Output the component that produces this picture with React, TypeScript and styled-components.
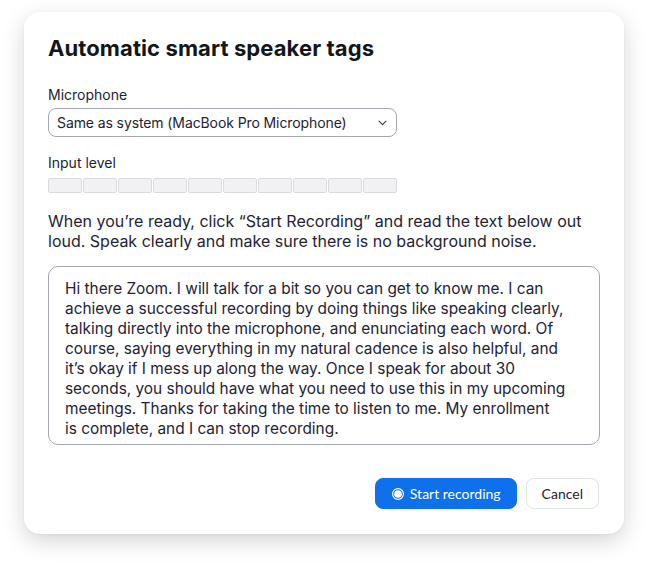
import React from "react";
import styled, { createGlobalStyle } from "styled-components";

const GlobalStyle = createGlobalStyle`
  * { box-sizing: border-box; }
  html, body { margin: 0; padding: 0; background: #ffffff; }
  body { font-family: Inter, "Noto Sans", sans-serif; color: #232333; }
`;

const Page = styled.div`
  padding: 12px 24px 36px 24px;
  width: 648px;
`;

const Card = styled.div`
  width: 600px;
  height: 522px;
  background: #ffffff;
  border-radius: 16px;
  box-shadow: 0 7px 22px rgba(0, 0, 0, 0.17), 0 1px 3px rgba(0, 0, 0, 0.04);
  padding: 22px 24px 25px 24px;
  display: flex;
  flex-direction: column;
`;

const Title = styled.h1`
  margin: 0;
  font-family: Inter, sans-serif;
  font-size: 22px;
  line-height: 28px;
  font-weight: 700;
  letter-spacing: 0.1px;
  color: #131619;
`;

const Label = styled.div<{ $top: number; $bottom: number }>`
  margin-top: ${(p) => p.$top}px;
  margin-bottom: ${(p) => p.$bottom}px;
  font-size: 14px;
  line-height: 20px;
  font-weight: 400;
  color: #232333;
`;

const Select = styled.div`
  width: 349px;
  height: 30px;
  border: 1px solid #a3a7ae;
  border-radius: 8px;
  display: flex;
  align-items: center;
  justify-content: space-between;
  padding: 0 9px 0 8px;
  font-size: 14px;
  letter-spacing: -0.1px;
  color: #232333;
`;

const Meter = styled.div`
  display: flex;
  gap: 1px;
  width: 349px;
`;

const Segment = styled.div`
  width: 34px;
  height: 15px;
  background: #f1f1f5;
  border: 1px solid #d9d9e0;
  border-radius: 2px;
`;

const Instructions = styled.p`
  margin: 18px 0 0 0;
  font-size: 16px;
  line-height: 20px;
  color: #232333;
  white-space: nowrap;
`;

const Script = styled.div`
  margin-top: 15px;
  width: 552px;
  height: 179px;
  border: 1px solid #a3a7ae;
  border-radius: 10px;
  padding: 12px 16px 6px 16px;
  font-size: 15.4px;
  line-height: 20px;
  color: #232333;
  white-space: nowrap;
`;

const Footer = styled.div`
  margin-top: 33px;
  display: flex;
  justify-content: flex-end;
  gap: 9px;
  padding-right: 1px;
`;

const Button = styled.button<{ $primary?: boolean }>`
  height: 31px;
  border-radius: 8px;
  font-family: Lato, sans-serif;
  font-size: 14px;
  display: inline-flex;
  align-items: center;
  gap: 6px;
  cursor: pointer;
  padding: ${(p) => (p.$primary ? "0 15px 0 16px" : "0 15px")};
  background: ${(p) => (p.$primary ? "#0e71eb" : "#ffffff")};
  color: ${(p) => (p.$primary ? "#ffffff" : "#232333")};
  border: 1px solid ${(p) => (p.$primary ? "#0e71eb" : "#dfe3e8")};
`;

const RecordIcon = () => (
  <svg width="12" height="12" viewBox="0 0 12 12">
    <circle cx="6" cy="6" r="5.4" fill="none" stroke="#ffffff" strokeWidth="1.2" />
    <circle cx="6" cy="6" r="3.8" fill="#ffffff" />
  </svg>
);

const Chevron = () => (
  <svg width="9" height="6" viewBox="0 0 9 6">
    <path d="M1 1.2 L4.5 4.6 L8 1.2" fill="none" stroke="#3a3a44" strokeWidth="1.1" strokeLinecap="round" strokeLinejoin="round" />
  </svg>
);

const scriptLines = [
  "Hi there Zoom. I will talk for a bit so you can get to know me. I can",
  "achieve a successful recording by doing things like speaking clearly,",
  "talking directly into the microphone, and enunciating each word. Of",
  "course, saying everything in my natural cadence is also helpful, and",
  "it\u2019s okay if I mess up along the way. Once I speak for about 30",
  "seconds, you should have what you need to use this in my upcoming",
  "meetings. Thanks for taking the time to listen to me. My enrollment",
  "is complete, and I can stop recording.",
];

export default function App() {
  return (
    <>
      <GlobalStyle />
      <Page>
        <Card>
          <Title>Automatic smart speaker tags</Title>
          <Label $top={23} $bottom={3}>Microphone</Label>
          <Select>
            <span>Same as system (MacBook Pro Microphone)</span>
            <Chevron />
          </Select>
          <Label $top={16} $bottom={5}>Input level</Label>
          <Meter>
            {Array.from({ length: 10 }).map((_, i) => (
              <Segment key={i} />
            ))}
          </Meter>
          <Instructions>
            When you{"\u2019"}re ready, click {"\u201C"}Start Recording{"\u201D"} and read the text below out
            <br />
            loud. Speak clearly and make sure there is no background noise.
          </Instructions>
          <Script>
            {scriptLines.map((l, i) => (
              <React.Fragment key={i}>
                {l}
                {i < scriptLines.length - 1 && <br />}
              </React.Fragment>
            ))}
          </Script>
          <Footer>
            <Button $primary>
              <RecordIcon />
              Start recording
            </Button>
            <Button>Cancel</Button>
          </Footer>
        </Card>
      </Page>
    </>
  );
}
